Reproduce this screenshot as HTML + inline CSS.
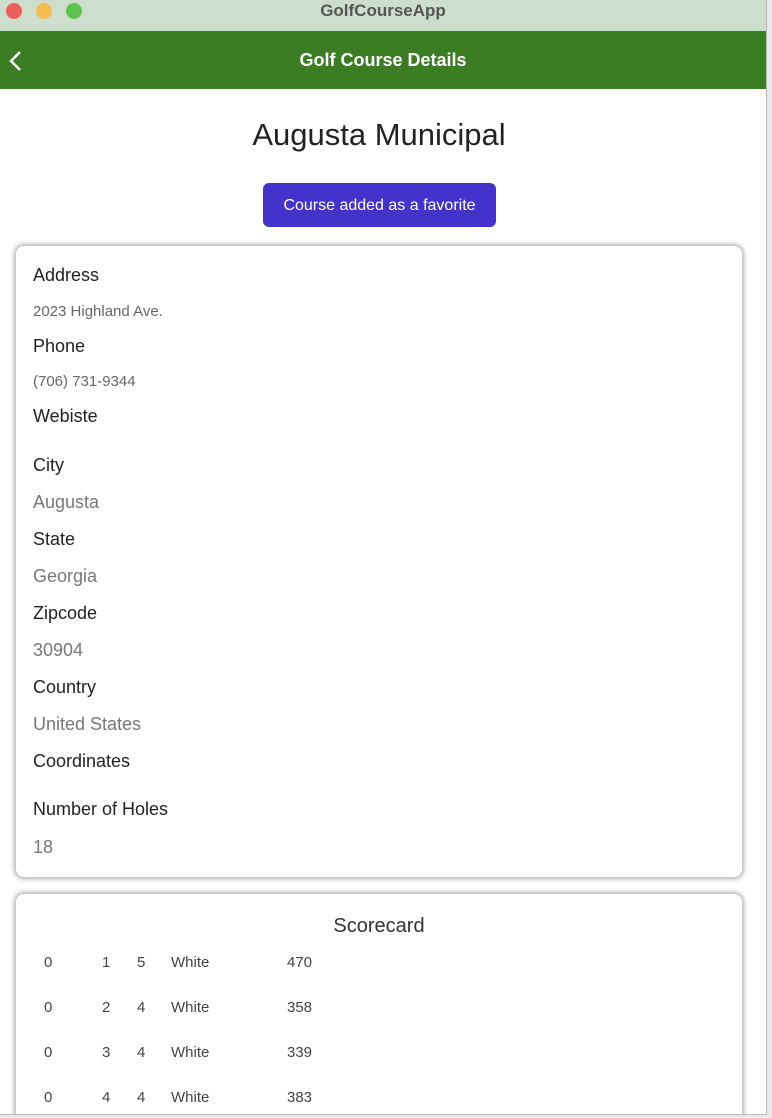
<!DOCTYPE html>
<html><head><meta charset="utf-8"><style>
*{margin:0;padding:0;box-sizing:border-box}
body{width:772px;height:1118px;overflow:hidden;background:#e8e8e8;font-family:"Liberation Sans",sans-serif;position:relative}
.win{position:absolute;left:0;top:0;width:767px;height:1115px;background:#fff;overflow:hidden;border-right:1px solid #bbb;border-bottom:1px solid #bbb}
.tb{position:absolute;left:0;top:0;width:100%;height:31px;background:#cddfcc;text-align:center;font-weight:bold;font-size:17px;line-height:22px;color:#555}
.dot{position:absolute;top:3px;width:16px;height:16px;border-radius:50%}
.nav{position:absolute;left:0;top:31px;width:100%;height:58px;background:#3a7d22;color:#fff;font-weight:bold;font-size:18px;text-align:center;line-height:58px}
.t{position:absolute;white-space:nowrap}
.card{position:absolute;left:16px;width:726px;background:#fff;border-radius:8px;box-shadow:0 0 5px 2px rgba(0,0,0,.3)}
.l{font-size:18px;color:#222}
.v{font-size:15px;color:#666}
.v2{font-size:18px;color:#777}
.s{font-size:15px;color:#444}
</style></head><body>
<div class="win">
<div class="tb">GolfCourseApp
<div class="dot" style="left:6px;background:#ec5f58"></div>
<div class="dot" style="left:36px;background:#f4bd4f"></div>
<div class="dot" style="left:66px;background:#5cc34f"></div>
</div>
<div class="nav">Golf Course Details
<svg style="position:absolute;left:8px;top:19px" width="14" height="22" viewBox="0 0 14 22"><path d="M12 2 L3 11 L12 20" stroke="#fff" stroke-width="2.5" fill="none"/></svg>
</div>
<div class="t" style="left:0;width:758px;text-align:center;top:117px;font-size:31px;color:#222">Augusta Municipal</div>
<div style="position:absolute;left:263px;top:183px;width:233px;height:44px;background:#4432cc;border-radius:6px;color:#fff;font-size:16px;text-align:center;line-height:46px">Course added as a favorite</div>
<div class="card" style="top:246px;height:631px">
<div class="t l" style="left:17px;top:19px">Address</div>
<div class="t v" style="left:17px;top:57px">2023 Highland Ave.</div>
<div class="t l" style="left:17px;top:90px">Phone</div>
<div class="t v" style="left:17px;top:127px">(706) 731-9344</div>
<div class="t l" style="left:17px;top:160px">Webiste</div>
<div class="t l" style="left:17px;top:209px">City</div>
<div class="t v2" style="left:17px;top:246px">Augusta</div>
<div class="t l" style="left:17px;top:283px">State</div>
<div class="t v2" style="left:17px;top:320px">Georgia</div>
<div class="t l" style="left:17px;top:357px">Zipcode</div>
<div class="t v2" style="left:17px;top:394px">30904</div>
<div class="t l" style="left:17px;top:431px">Country</div>
<div class="t v2" style="left:17px;top:468px">United States</div>
<div class="t l" style="left:17px;top:505px">Coordinates</div>
<div class="t l" style="left:17px;top:553px">Number of Holes</div>
<div class="t v2" style="left:17px;top:591px">18</div>
</div>
<div class="card" style="top:894px;height:260px">
<div class="t" style="left:0;width:726px;text-align:center;top:21px;font-size:20px;color:#333">Scorecard</div>
<div class="t s" style="left:28px;top:60px">0</div><div class="t s" style="left:86px;top:60px">1</div><div class="t s" style="left:121px;top:60px">5</div><div class="t s" style="left:155px;top:60px">White</div><div class="t s" style="left:271px;top:60px">470</div>
<div class="t s" style="left:28px;top:105px">0</div><div class="t s" style="left:86px;top:105px">2</div><div class="t s" style="left:121px;top:105px">4</div><div class="t s" style="left:155px;top:105px">White</div><div class="t s" style="left:271px;top:105px">358</div>
<div class="t s" style="left:28px;top:150px">0</div><div class="t s" style="left:86px;top:150px">3</div><div class="t s" style="left:121px;top:150px">4</div><div class="t s" style="left:155px;top:150px">White</div><div class="t s" style="left:271px;top:150px">339</div>
<div class="t s" style="left:28px;top:195px">0</div><div class="t s" style="left:86px;top:195px">4</div><div class="t s" style="left:121px;top:195px">4</div><div class="t s" style="left:155px;top:195px">White</div><div class="t s" style="left:271px;top:195px">383</div>
</div>
</div>
</body></html>
